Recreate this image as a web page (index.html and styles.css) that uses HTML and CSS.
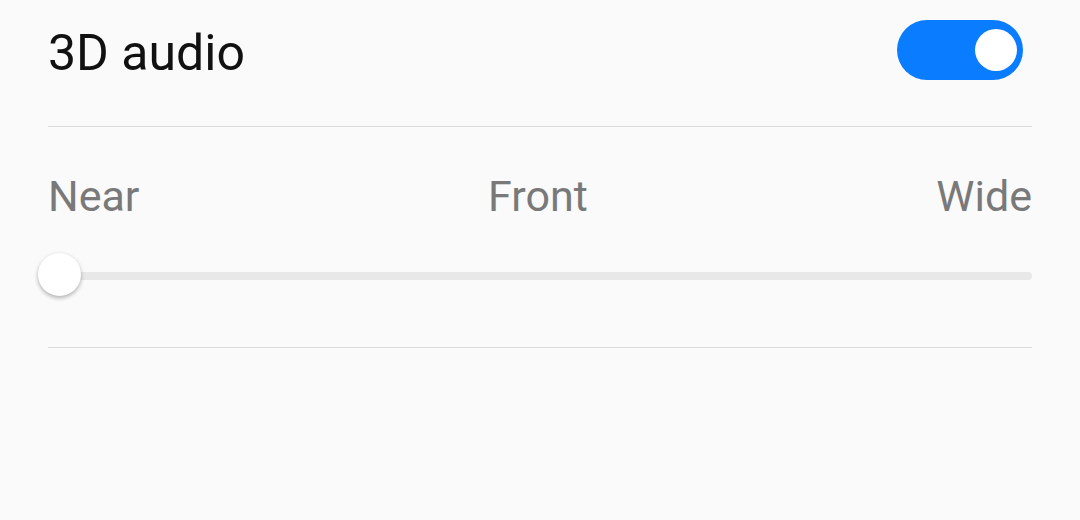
FILE: index.html
```html
<html>
  <head>
    <title>3D audio</title>
    <link rel="stylesheet" href="styles.css">
  </head>
  <body>
    <div class="panel">
      <div class="row_title">
        <span class="title">3D audio</span>
        <div class="toggle"><div class="knob"></div></div>
      </div>
      <div class="divider"></div>
      <div class="labels">
        <span>Near</span>
        <span>Front</span>
        <span>Wide</span>
      </div>
      <div class="slider">
        <div class="track"></div>
        <div class="thumb"></div>
      </div>
      <div class="divider"></div>
    </div>
  </body>
</html>
```

FILE: styles.css
```css
body {
    margin: 0;
    background: #fafafa;
    font-family: Roboto, "Liberation Sans", sans-serif;
}

.panel {
    padding: 0 48px;
}

.row_title {
    height: 126px;
    display: flex;
    align-items: center;
    justify-content: space-between;
    padding-bottom: 26px;
    box-sizing: border-box;
    padding-right: 9px;
}

.title {
    font-size: 50px;
    color: #111111;
    padding-top: 5px;
}

.toggle {
    width: 126px;
    height: 60px;
    border-radius: 30px;
    background: #0a7cff;
    display: flex;
    align-items: center;
    justify-content: flex-end;
    padding-right: 6px;
    box-sizing: border-box;
}

.knob {
    width: 42px;
    height: 42px;
    border-radius: 50%;
    background: #ffffff;
}

.divider {
    height: 1px;
    background: #dcdcdc;
}

.labels {
    display: flex;
    justify-content: space-between;
    font-size: 43px;
    color: #797979;
    padding-top: 45px;
    line-height: 48px;
}

.slider {
    position: relative;
    height: 127px;
}

.track {
    position: absolute;
    left: 0;
    right: 0;
    top: 52px;
    height: 8px;
    border-radius: 4px;
    background: #e8e8e8;
}

.thumb {
    position: absolute;
    left: -10px;
    top: 33px;
    width: 43px;
    height: 43px;
    border-radius: 50%;
    background: #ffffff;
    box-shadow: 0 2px 4px rgba(0, 0, 0, 0.3);
}
```
